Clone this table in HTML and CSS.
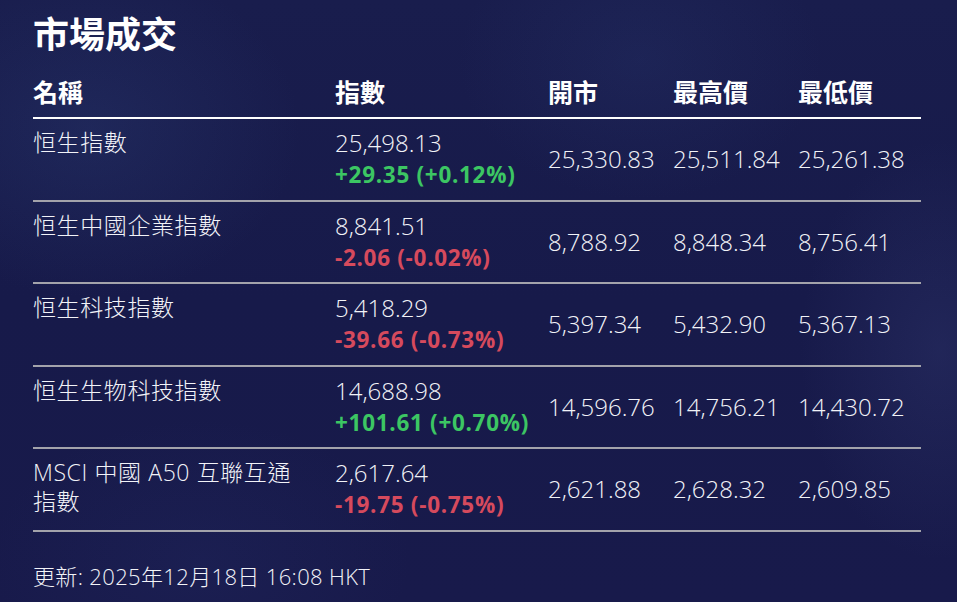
FILE: index.html
```html
<!DOCTYPE html>
<html lang="zh-Hant">
<head>
<meta charset="utf-8">
<title>市場成交</title>
<link rel="stylesheet" href="styles.css">
</head>
<body>
<main class="page">
  <h1 class="title">市場成交</h1>
  <div class="table">
    <div class="row head">
      <div class="cell">名稱</div>
      <div class="cell">指數</div>
      <div class="cell">開市</div>
      <div class="cell">最高價</div>
      <div class="cell">最低價</div>
    </div>
    <div class="row">
      <div class="cell name">恒生指數</div>
      <div class="cell idx"><div class="val">25,498.13</div><div class="chg up">+29.35 (+0.12%)</div></div>
      <div class="cell num">25,330.83</div>
      <div class="cell num">25,511.84</div>
      <div class="cell num">25,261.38</div>
    </div>
    <div class="row">
      <div class="cell name">恒生中國企業指數</div>
      <div class="cell idx"><div class="val">8,841.51</div><div class="chg down">-2.06 (-0.02%)</div></div>
      <div class="cell num">8,788.92</div>
      <div class="cell num">8,848.34</div>
      <div class="cell num">8,756.41</div>
    </div>
    <div class="row">
      <div class="cell name">恒生科技指數</div>
      <div class="cell idx"><div class="val">5,418.29</div><div class="chg down">-39.66 (-0.73%)</div></div>
      <div class="cell num">5,397.34</div>
      <div class="cell num">5,432.90</div>
      <div class="cell num">5,367.13</div>
    </div>
    <div class="row">
      <div class="cell name">恒生生物科技指數</div>
      <div class="cell idx"><div class="val">14,688.98</div><div class="chg up">+101.61 (+0.70%)</div></div>
      <div class="cell num">14,596.76</div>
      <div class="cell num">14,756.21</div>
      <div class="cell num">14,430.72</div>
    </div>
    <div class="row">
      <div class="cell name">MSCI 中國 A50 互聯互通<br>指數</div>
      <div class="cell idx"><div class="val">2,617.64</div><div class="chg down">-19.75 (-0.75%)</div></div>
      <div class="cell num">2,621.88</div>
      <div class="cell num">2,628.32</div>
      <div class="cell num">2,609.85</div>
    </div>
  </div>
  <p class="updated">更新: 2025年12月18日 16:08 HKT</p>
</main>
</body>
</html>
```
FILE: styles.css
```css
html, body {
  margin: 0;
  padding: 0;
}
body {
  width: 957px;
  height: 602px;
  overflow: hidden;
  color: #f2f3f8;
  font-family: "Open Sans", "Noto Sans CJK TC", sans-serif;
  background-color: #171a4a;
  background-image:
    radial-gradient(ellipse 300px 240px at 90px 130px, rgba(55, 80, 140, 0.22), transparent 70%),
    radial-gradient(ellipse 260px 200px at 640px 60px, rgba(50, 70, 130, 0.18), transparent 70%),
    radial-gradient(ellipse 200px 300px at 940px 350px, rgba(70, 80, 140, 0.22), transparent 70%),
    radial-gradient(ellipse 300px 200px at 200px 560px, rgba(40, 50, 110, 0.2), transparent 70%),
    linear-gradient(180deg, #191d4d 0%, #171a4a 50%, #181a4b 100%);
}
.page {
  padding: 10px 36px 0 33px;
}
.title {
  margin: 0;
  font-family: "Noto Sans CJK TC", sans-serif;
  font-size: 36px;
  font-weight: 700;
  line-height: 44px;
  color: #ffffff;
}
.table {
  margin-top: 20px;
  width: 888px;
}
.row {
  display: grid;
  grid-template-columns: 302px 213px 125px 125px 1fr;
  align-items: center;
  height: 80.5px;
  border-bottom: 2px solid #a3a3ab;
}
.row.head {
  height: 43px;
  align-items: start;
  border-bottom-color: #ffffff;
  font-family: "Noto Sans CJK TC", sans-serif;
  font-size: 25px;
  font-weight: 700;
  line-height: 34px;
  color: #ffffff;
}
.cell {
  white-space: nowrap;
}
.name {
  align-self: start;
  padding-top: 9px;
  font-family: "Open Sans", "Noto Sans CJK TC", sans-serif;
  font-weight: 300;
  font-size: 23px;
  line-height: 29px;
  letter-spacing: 0.6px;
}
.idx {
  align-self: start;
  padding-top: 8px;
}
.val, .num {
  font-size: 24px;
  font-weight: 350;
  line-height: 32px;
}
.chg {
  font-size: 22.5px;
  font-weight: 700;
  line-height: 32px;
  letter-spacing: 0.7px;
}
.up {
  color: #3cc663;
}
.down {
  color: #d64a5d;
}
.updated {
  margin: 29px 0 0;
  font-family: "Open Sans", "Noto Sans CJK TC", sans-serif;
  font-size: 22px;
  font-weight: 300;
  line-height: 30px;
  letter-spacing: 0.35px;
}
```
